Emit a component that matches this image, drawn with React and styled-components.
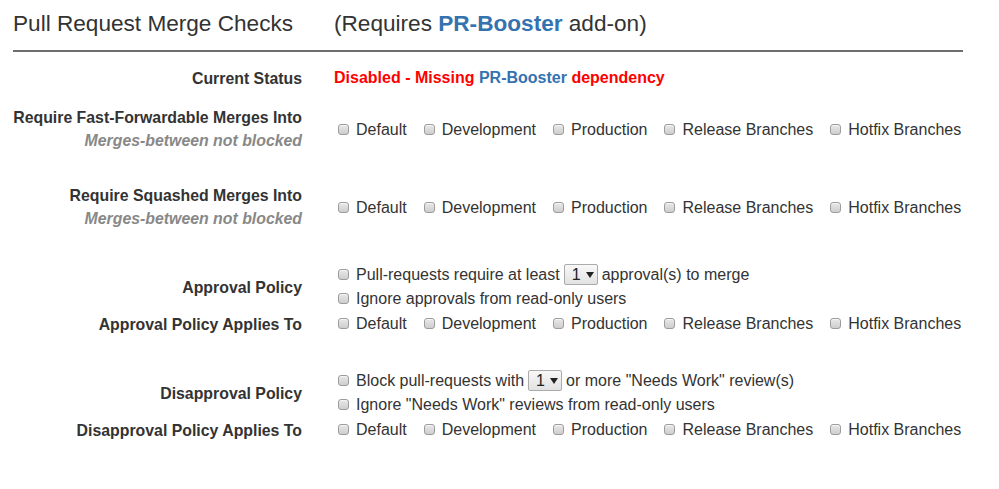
import React from "react";
import styled, { createGlobalStyle } from "styled-components";

const Global = createGlobalStyle`
  html, body { margin: 0; padding: 0; background: #fff; }
  body { font-family: "Liberation Sans", Arial, sans-serif; color: #333; }
`;

const Page = styled.div`
  padding: 10px 0 0 13px;
  width: 950px;
`;

const Row = styled.div`
  display: grid;
  grid-template-columns: 289px 1fr;
  column-gap: 32px;
  align-items: center;
  margin-top: ${(p) => p.$top || 0}px;
`;

const Title = styled.h1`
  margin: 0;
  font-size: 22.6px;
  line-height: 28px;
  font-weight: normal;
  color: #333;
  white-space: nowrap;
`;

const Brand = styled.span`
  color: #3572b0;
  font-weight: bold;
`;

const Divider = styled.hr`
  margin: 12px 0 0;
  border: 0;
  border-top: 2px solid #6e6e6e;
  height: 0;
`;

const Label = styled.div`
  text-align: right;
  font-weight: bold;
  font-size: 15.85px;
  line-height: 23px;
  color: #333;
  white-space: nowrap;
`;

const Note = styled.div`
  font-style: italic;
  color: #888;
`;

const Value = styled.div`
  font-size: 16px;
  line-height: 24px;
  color: #333;
  padding-top: ${(p) => p.$shift || 0}px;
`;

const Status = styled.div`
  font-weight: bold;
  color: #f00;
`;

const Line = styled.div`
  display: flex;
  align-items: baseline;
  white-space: nowrap;
  height: 24px;
`;

const Options = styled.div`
  display: flex;
  align-items: baseline;
  gap: 13px;
  white-space: nowrap;
  height: 24px;
`;

const Option = styled.label`
  display: inline-flex;
  align-items: baseline;
`;

const Box = styled.span`
  display: inline-block;
  box-sizing: border-box;
  width: 11px;
  height: 11px;
  margin: 0 7px 5px 4px;
  border: 1px solid #9c9c9c;
  border-radius: 3px;
  background: linear-gradient(#e8e8e8, #cecece);
  box-shadow: inset 0 1px 0 rgba(255, 255, 255, 0.6);
`;

const Select = styled.span`
  display: inline-flex;
  align-items: baseline;
  box-sizing: border-box;
  height: 21px;
  width: 34px;
  margin: 0 4px;
  padding: 0 0 0 7px;
  border: 1px solid #ababab;
  border-radius: 2px;
  background: linear-gradient(#f8f8f8, #e2e2e2);
  font-size: 16px;
  line-height: 19px;
  color: #222;
`;

const Arrow = styled.span`
  display: inline-block;
  width: 0;
  height: 0;
  margin-left: 5px;
  border-left: 4px solid transparent;
  border-right: 4px solid transparent;
  border-top: 6px solid #222;
  transform: translateY(-2px);
`;

const BRANCHES = ["Default", "Development", "Production", "Release Branches", "Hotfix Branches"];

function Check({ children }) {
  return (
    <Option>
      <Box />
      {children}
    </Option>
  );
}

function BranchList() {
  return (
    <Options>
      {BRANCHES.map((b) => (
        <Check key={b}>{b}</Check>
      ))}
    </Options>
  );
}

function Dropdown() {
  return (
    <Select>
      1<Arrow />
    </Select>
  );
}

export default function App() {
  return (
    <>
      <Global />
      <Page>
        <Row>
          <Title>Pull Request Merge Checks</Title>
          <Title>
            (Requires <Brand>PR-Booster</Brand> add-on)
          </Title>
        </Row>
        <Divider />

        <Row $top={14}>
          <Label>Current Status</Label>
          <Value>
            <Status>
              Disabled - Missing <Brand>PR-Booster</Brand> dependency
            </Status>
          </Value>
        </Row>

        <Row $top={16}>
          <Label>
            Require Fast-Forwardable Merges Into
            <Note>Merges-between not blocked</Note>
          </Label>
          <Value $shift={2}>
            <BranchList />
          </Value>
        </Row>

        <Row $top={32}>
          <Label>
            Require Squashed Merges Into
            <Note>Merges-between not blocked</Note>
          </Label>
          <Value $shift={2}>
            <BranchList />
          </Value>
        </Row>

        <Row $top={33}>
          <Label>Approval Policy</Label>
          <Value>
            <Line>
              <Box />
              Pull-requests require at least
              <Dropdown />
              approval(s) to merge
            </Line>
            <Line>
              <Box />
              Ignore approvals from read-only users
            </Line>
          </Value>
        </Row>
        <Row $top={1}>
          <Label>Approval Policy Applies To</Label>
          <Value>
            <BranchList />
          </Value>
        </Row>

        <Row $top={33}>
          <Label>Disapproval Policy</Label>
          <Value>
            <Line>
              <Box />
              Block pull-requests with
              <Dropdown />
              or more "Needs Work" review(s)
            </Line>
            <Line>
              <Box />
              Ignore "Needs Work" reviews from read-only users
            </Line>
          </Value>
        </Row>
        <Row $top={1}>
          <Label>Disapproval Policy Applies To</Label>
          <Value>
            <BranchList />
          </Value>
        </Row>
      </Page>
    </>
  );
}
